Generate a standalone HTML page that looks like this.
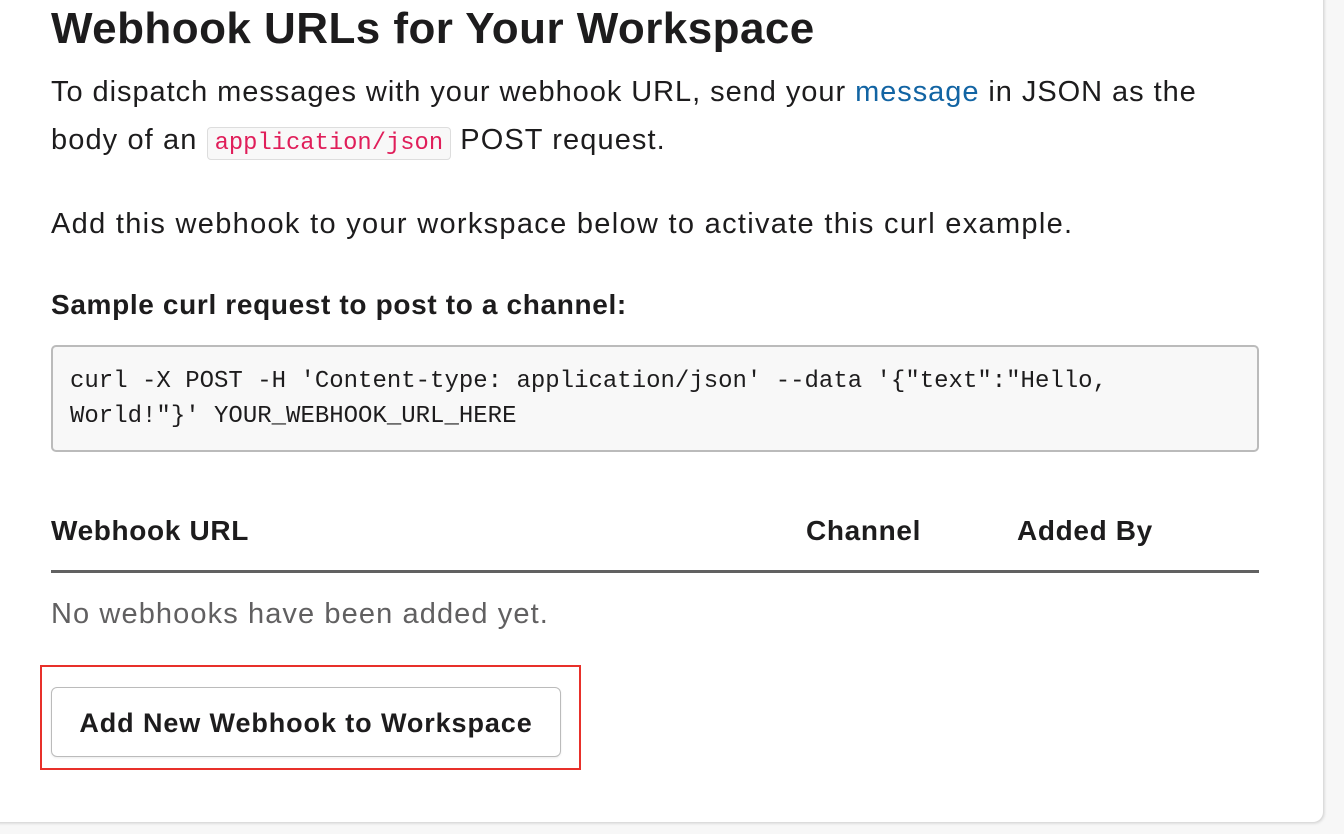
<!DOCTYPE html>
<html><head><meta charset="utf-8"><style>
*{margin:0;padding:0;box-sizing:border-box}
body{width:1344px;height:834px;background:#f7f7f7;font-family:"Liberation Sans",sans-serif;color:#1d1c1d;position:relative;overflow:hidden}
.card{position:absolute;left:-20px;top:-20px;width:1343px;height:842px;background:#fff;border-radius:10px;box-shadow:1px 1px 3px rgba(0,0,0,.18)}
.a{position:absolute;white-space:nowrap}
h1{font-size:44px;font-weight:bold;letter-spacing:0.45px}
.p{font-size:29px;letter-spacing:1.1px;color:#1d1c1d}
a{color:#1264a3;text-decoration:none}
code{font-family:"Liberation Mono",monospace;font-size:23.8px;color:#e01e5a;background:#f8f8f8;border:1px solid #ddd;border-radius:4px;padding:2px 7px;letter-spacing:0}
.pre{left:51px;top:345px;width:1208px;height:107px;background:#f8f8f8;border:2px solid #bbb;border-radius:5px;font-family:"Liberation Mono",monospace;font-size:24px;line-height:35px;padding:17px 0 0 17px;color:#1d1c1d}
.th{font-size:28px;font-weight:bold;letter-spacing:0.65px}
</style></head><body>
<div class="card"></div>
<h1 class="a" style="left:51px;top:4px">Webhook URLs for Your Workspace</h1>
<div class="a p" style="left:51px;top:76px;letter-spacing:0.95px">To dispatch messages with your webhook URL, send your <a>message</a> in JSON as the</div>
<div class="a p" style="left:51px;top:124px">body of an <code>application/json</code> POST request.</div>
<div class="a p" style="left:51px;top:208px;letter-spacing:1.3px">Add this webhook to your workspace below to activate this curl example.</div>
<div class="a th" style="left:51px;top:289px">Sample curl request to post to a channel:</div>
<div class="a pre">curl -X POST -H 'Content-type: application/json' --data '{"text":"Hello,<br>World!"}' YOUR_WEBHOOK_URL_HERE</div>
<div class="a th" style="left:51px;top:515px">Webhook URL</div>
<div class="a th" style="left:806px;top:515px">Channel</div>
<div class="a th" style="left:1017px;top:515px">Added By</div>
<div class="a" style="left:51px;top:570px;width:1208px;height:3px;background:#616161"></div>
<div class="a p" style="left:51px;top:598px;color:#616061">No webhooks have been added yet.</div>
<div class="a" style="left:40px;top:665px;width:541px;height:105px;border:2px solid #e8302a"></div>
<div class="a" style="left:51px;top:687px;width:510px;height:70px;border:1px solid #bbb;border-radius:6px;box-shadow:0 1px 2px rgba(0,0,0,.08);text-align:center;line-height:70px;font-size:27px;font-weight:bold;letter-spacing:0.9px">Add New Webhook to Workspace</div>
</body></html>
